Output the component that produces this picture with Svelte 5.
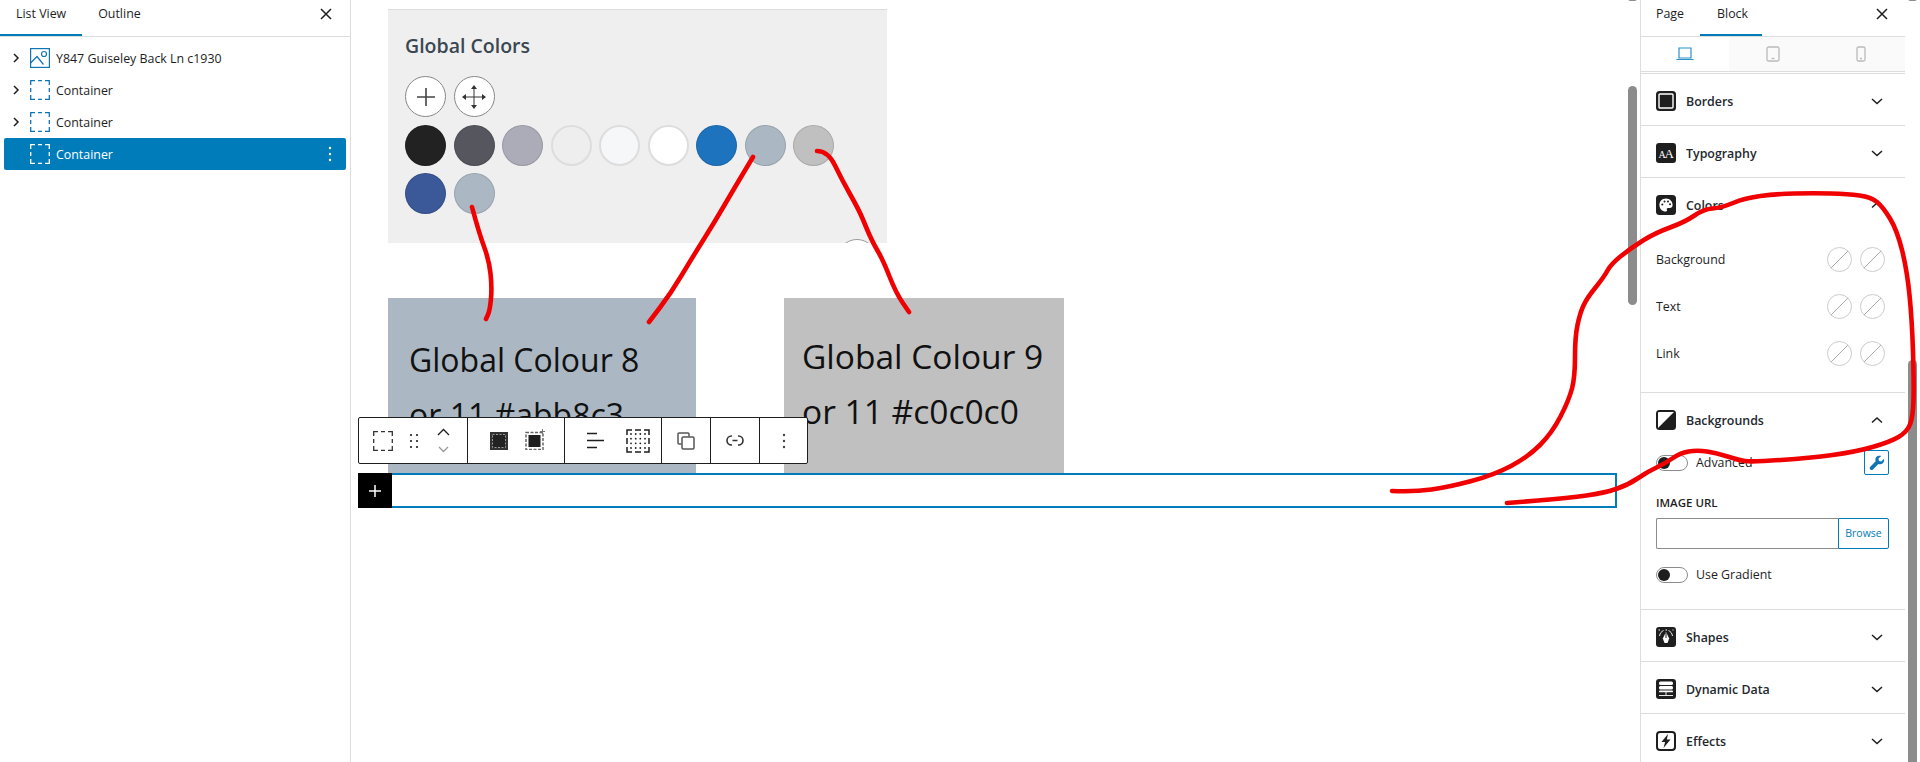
<script>
  const tree = [
    { label: 'Y847 Guiseley Back Ln c1930', kind: 'image', arrow: true },
    { label: 'Container', kind: 'box', arrow: true },
    { label: 'Container', kind: 'box', arrow: true },
    { label: 'Container', kind: 'box', arrow: false, selected: true }
  ];
  const rowOne = ['#222222', '#55565e', '#abacb8', '#eeeeee', '#f6f7f8', '#ffffff', '#1e73be', '#abb8c3', '#c0c0c0'];
  const rowTwo = ['#3b5998', '#abb8c3'];
  const colorRows = ['Background', 'Text', 'Link'];
  const gridDots = [5, 9.700, 14.300, 19];

  const strokes = [
    [[472,207],[479,233],[489,260],[492,287],[490,310],[486,319]],
    [[753,157],[735,187],[714,223],[692,258],[671,293],[649,322]],
    [[817,151],[828,151],[842,180],[859,210],[866,227],[873,243],[883,260],[896,293],[909,312]],
    [[1392,491],[1414,492],[1449,487],[1494,475],[1528,457],[1552,433],[1569,400],[1575,377],[1575,337],[1580,313],[1587,298],[1604,277],[1611,264],[1631,248],[1655,233],[1685,222],[1704,209],[1721,208],[1745,198],[1776,194],[1814,193],[1848,194],[1871,197],[1883,207],[1897,230],[1907,270],[1912,320],[1914,383],[1913,417],[1907,432],[1890,442],[1855,452],[1810,458],[1752,462],[1738,460],[1717,453],[1697,450],[1680,453],[1666,463],[1647,472],[1628,485],[1604,493],[1569,498],[1507,503]]
  ];

  // smooth the hand drawn lines through the midpoints
  function smooth(pts) {
    let d = `M${pts[0][0]} ${pts[0][1]}`;
    for (let i = 1; i < pts.length - 1; i++) {
      const mx = (pts[i][0] + pts[i + 1][0]) / 2;
      const my = (pts[i][1] + pts[i + 1][1]) / 2;
      d += ` Q${pts[i][0]} ${pts[i][1]} ${mx} ${my}`;
    }
    const last = pts[pts.length - 1];
    return d + ` L${last[0]} ${last[1]}`;
  }
</script>

{#snippet chevron(up)}
  <svg class="chev" width="14" height="14" viewBox="0 0 14 14"><path d={up ? 'M2 9.500 7 5l5 4.500' : 'M2 5l5 4.500L12 5'} /></svg>
{/snippet}

{#snippet dashed(size)}
  <svg width={size} height={size} viewBox="0 0 20 20" fill="none" stroke="currentColor" stroke-width="1.300">
    <path d="M.7 5V.7H5M8 .7h4M15 .7h4.300V5M19.300 8v4M19.300 15v4.300H15M12 19.300H8M5 19.300H.7V15M.7 12V8" />
  </svg>
{/snippet}

{#snippet sectionHead(label, up, icon)}
  <div class="sec-head">
    <span class="sec-icon">{@render icon()}</span>
    <span class="sec-label">{label}</span>
    {@render chevron(up)}
  </div>
{/snippet}

{#snippet iconBorders()}
  <svg viewBox="0 0 20 20"><rect width="20" height="20" rx="3.500" fill="#1e1e1e" /><rect x="3" y="3" width="14" height="14" rx="1" fill="#1e1e1e" stroke="#fff" stroke-width="1.400" /></svg>
{/snippet}
{#snippet iconType()}
  <svg viewBox="0 0 20 20"><rect width="20" height="20" rx="3" fill="#1e1e1e" /><text x="2.500" y="14.500" class="aa">A</text><text x="8.500" y="14.500" class="aa big">A</text></svg>
{/snippet}
{#snippet iconColors()}
  <svg viewBox="0 0 20 20"><rect width="20" height="20" rx="3.500" fill="#1e1e1e" /><path d="M10 3.500c-3.800 0-6.600 2.800-6.600 6.400s2.900 6.600 6.300 6.600c1.300 0 1.600-.9 1.200-1.700-.5-1 .1-1.900 1.200-1.900h1.700c1.600 0 2.800-1.200 2.800-3 0-3.500-2.800-6.400-6.600-6.400z" fill="#fff" /><g fill="#1e1e1e"><circle cx="6.300" cy="9.500" r="1" /><circle cx="8.500" cy="6.500" r="1" /><circle cx="12" cy="6.500" r="1" /><circle cx="14" cy="9.300" r="1" /></g></svg>
{/snippet}
{#snippet iconBackgrounds()}
  <svg viewBox="0 0 20 20"><rect width="20" height="20" rx="3.500" fill="#1e1e1e" /><path d="M2 18 18 2H3a1 1 0 0 0-1 1z" fill="#fff" /></svg>
{/snippet}
{#snippet iconShapes()}
  <svg viewBox="0 0 20 20"><rect width="20" height="20" rx="3" fill="#1e1e1e" /><path d="M10 5 6.800 11.500 8.500 16h3l1.700-4.500z" fill="#fff" /><path d="M10 6v5" stroke="#1e1e1e" /><path d="M3.500 9C4 6 5.500 4.500 7.500 3.500M16.500 9C16 6 14.500 4.500 12.500 3.500" fill="none" stroke="#fff" stroke-width=".9" /><path d="M2.500 3h15" stroke="#fff" stroke-width="1" stroke-dasharray="1.500 5.500" /></svg>
{/snippet}
{#snippet iconData()}
  <svg viewBox="0 0 20 20"><rect width="20" height="20" rx="3" fill="#1e1e1e" /><rect x="3" y="2.500" width="14" height="3.500" rx="1.500" fill="#fff" /><rect x="3" y="7" width="14" height="3.500" rx="1.500" fill="#fff" /><rect x="3" y="11.500" width="14" height="1.800" rx=".9" fill="#fff" /><path d="M10 13v3M3 16.500h14" stroke="#fff" stroke-width=".9" /></svg>
{/snippet}
{#snippet iconEffects()}
  <svg viewBox="0 0 20 20"><rect x="1" y="1" width="18" height="18" rx="3" fill="#fff" stroke="#1e1e1e" stroke-width="2" /><path d="M12 3 5.500 11h3.600L7.500 17 14.500 8.500h-3.700z" fill="#1e1e1e" /></svg>
{/snippet}

<div class="page">
  <aside class="list">
    <div class="tabs">
      <span class="tab active">List View</span>
      <span class="tab">Outline</span>
      <svg class="close" width="14" height="14" viewBox="0 0 14 14"><path d="M2 2l10 10M12 2 2 12" /></svg>
    </div>
    <ul>
      {#each tree as item}
        <li class:selected={item.selected}>
          <span class="arrow">
            {#if item.arrow}
              <svg width="8" height="10" viewBox="0 0 8 10"><path d="M2 1l4 4-4 4" /></svg>
            {/if}
          </span>
          <span class="tree-icon">
            {#if item.kind === 'image'}
              <svg width="20" height="20" viewBox="0 0 20 20" fill="none" stroke="currentColor" stroke-width="1.200"><rect x=".6" y=".6" width="18.800" height="18.800" /><path d="M.6 15 7 8.500l6.500 8" /><circle cx="14" cy="6" r="2.500" /></svg>
            {:else}
              {@render dashed(20)}
            {/if}
          </span>
          <span class="tree-label">{item.label}</span>
          {#if item.selected}
            <svg class="kebab" width="4" height="16" viewBox="0 0 4 16" fill="#fff"><circle cx="2" cy="2" r="1.200" /><circle cx="2" cy="8" r="1.200" /><circle cx="2" cy="14" r="1.200" /></svg>
          {/if}
        </li>
      {/each}
    </ul>
  </aside>

  <main class="canvas">
    <section class="palette">
      <h3>Global Colors</h3>
      <div class="swatches tools">
        <span class="swatch tool"><svg width="22" height="22" viewBox="0 0 22 22"><path d="M11 2v18M2 11h18" stroke="#444" stroke-width="1.600" /></svg></span>
        <span class="swatch tool"><svg width="30" height="30" viewBox="0 0 30 30" fill="#333"><path d="M15 5v20M5 15h20" stroke="#333" stroke-width="1" /><path d="M15 3l3 4h-6zM15 27l3-4h-6zM3 15l4-3v6zM27 15l-4-3v6z" /></svg></span>
      </div>
      <div class="swatches">
        {#each rowOne as c}
          <span class="swatch" class:pale={c > '#e'} style="background:{c}"></span>
        {/each}
      </div>
      <div class="swatches">
        {#each rowTwo as c}
          <span class="swatch" style="background:{c}"></span>
        {/each}
      </div>
      <span class="peek"></span>
    </section>

    <div class="samples">
      <div class="sample first">Global Colour 8<br />or 11 #abb8c3</div>
      <div class="sample second">Global Colour 9<br />or 11 #c0c0c0</div>
    </div>

    <div class="toolbar">
      <div class="tgroup g1">
        <span class="ti">{@render dashed(20)}</span>
        <svg width="10" height="16" viewBox="0 0 10 16" fill="#1e1e1e"><circle cx="2" cy="2" r="1.100" /><circle cx="8" cy="2" r="1.100" /><circle cx="2" cy="8" r="1.100" /><circle cx="8" cy="8" r="1.100" /><circle cx="2" cy="14" r="1.100" /><circle cx="8" cy="14" r="1.100" /></svg>
        <span class="updown">
          <svg width="13" height="8" viewBox="0 0 13 8"><path d="M1 7l5.500-5.500L12 7" /></svg>
          <svg class="off" width="13" height="8" viewBox="0 0 13 8"><path d="M2 2l4.500 4.500L11 2" /></svg>
        </span>
      </div>
      <div class="tgroup g2">
        <svg width="18" height="18" viewBox="0 0 18 18"><rect width="18" height="18" fill="#333" /><rect x="2.500" y="2.500" width="13" height="13" fill="#222" stroke="#999" stroke-dasharray="2 1.500" /></svg>
        <svg width="21" height="21" viewBox="0 0 21 21"><rect x="3.500" y="6" width="12" height="12" fill="#1e1e1e" /><path d="M1 3.500h17v17H1z" fill="none" stroke="#666" stroke-width="1.500" stroke-dasharray="3 1.500" /><path d="M17.500 0v5M15 2.500h5" stroke="#777" /></svg>
      </div>
      <div class="tgroup g3">
        <svg width="17" height="17" viewBox="0 0 17 17" stroke="#1e1e1e" stroke-width="1.300"><path d="M0 1.500h10M0 8.500h17M0 15.500h10" /></svg>
        <svg width="24" height="24" viewBox="0 0 24 24" fill="none" stroke="#1e1e1e" stroke-width="1.500">
          <path d="M1 6V1h5M9 1h6M18 1h5v5M23 9v6M23 18v5h-5M15 23H9M6 23H1v-5M1 15V9" />
          <g fill="#1e1e1e" stroke="none">
            {#each gridDots as y}
              {#each gridDots as x}
                <circle cx={x} cy={y} r=".9" />
              {/each}
            {/each}
          </g>
        </svg>
      </div>
      <div class="tgroup g4">
        <svg width="18" height="18" viewBox="0 0 18 18" fill="none" stroke="#555" stroke-width="1.500"><path d="M4.500 12H2a1 1 0 0 1-1-1V2a1 1 0 0 1 1-1h9a1 1 0 0 1 1 1v2.500" /><rect x="5" y="5" width="12" height="12" rx="1.200" /></svg>
      </div>
      <div class="tgroup g5">
        <svg width="18" height="11" viewBox="0 0 18 11" fill="none" stroke="#333" stroke-width="1.600"><path d="M6 1H5.500a4.500 4.500 0 0 0 0 9H6M12 1h.5a4.500 4.500 0 0 1 0 9H12M6.500 5.500h5" /></svg>
      </div>
      <div class="tgroup g6">
        <svg width="4" height="16" viewBox="0 0 4 16" fill="#444"><circle cx="2" cy="2" r="1.200" /><circle cx="2" cy="8" r="1.200" /><circle cx="2" cy="14" r="1.200" /></svg>
      </div>
    </div>

    <div class="new-block">
      <span class="add"><svg width="14" height="14" viewBox="0 0 14 14"><path d="M7 1v12M1 7h12" stroke="#fff" stroke-width="1.500" /></svg></span>
    </div>
    <span class="thumb thumb-left"></span>
    <span class="thumb thumb-left-top"></span>
  </main>

  <aside class="inspector">
    <div class="panel">
      <div class="tabs">
        <span class="tab">Page</span>
        <span class="tab active">Block</span>
        <svg class="close" width="14" height="14" viewBox="0 0 14 14"><path d="M2 2l10 10M12 2 2 12" /></svg>
      </div>
      <div class="devices">
        <span class="device on"><svg width="18" height="14" viewBox="0 0 18 14" fill="none" stroke="currentColor" stroke-width="1.200"><path d="M3 1h12v10H3zM.5 12.500h17" /></svg></span>
        <span class="device"><svg width="14" height="16" viewBox="0 0 14 16" fill="none" stroke="currentColor" stroke-width="1.300"><rect x="1" y="1" width="12" height="14" rx="1.500" /><path d="M5.500 12.500h3" /></svg></span>
        <span class="device"><svg width="10" height="16" viewBox="0 0 10 16" fill="none" stroke="currentColor" stroke-width="1.300"><rect x="1" y="1" width="8" height="14" rx="1.500" /><path d="M4 12.500h2" /></svg></span>
      </div>

      <section>{@render sectionHead('Borders', false, iconBorders)}</section>
      <section>{@render sectionHead('Typography', false, iconType)}</section>
      <section class="open colors">
        {@render sectionHead('Colors', true, iconColors)}
        {#each colorRows as name}
          <div class="color-row">
            <span>{name}</span>
            <span class="none"></span>
            <span class="none"></span>
          </div>
        {/each}
      </section>
      <section class="open bgs">
        {@render sectionHead('Backgrounds', true, iconBackgrounds)}
        <div class="toggle-row">
          <span class="toggle"></span>
          <span class="toggle-label">Advanced</span>
          <span class="wrench"><svg width="16" height="16" viewBox="0 0 16 16" fill="#0f75b5"><path d="M15 3.800 12.300 6.400 10 5.900 9.500 3.600 12.200 1C10.300.3 8.300.8 7.300 2.100 6.300 3.300 6.100 5 6.700 6.300L1.300 11.700c-.8.800-.8 1.900 0 2.700.8.800 2 .8 2.700 0L9.400 9c1.400.6 3.200.4 4.400-.7C15 7.200 15.500 5.400 15 3.800z" /></svg></span>
        </div>
        <label class="field-label" for="img-url">IMAGE URL</label>
        <div class="url">
          <input id="img-url" type="text" />
          <span class="browse">Browse</span>
        </div>
        <div class="toggle-row gradient">
          <span class="toggle"></span>
          <span class="toggle-label">Use Gradient</span>
        </div>
      </section>
      <section>{@render sectionHead('Shapes', false, iconShapes)}</section>
      <section>{@render sectionHead('Dynamic Data', false, iconData)}</section>
      <section class="last">{@render sectionHead('Effects', false, iconEffects)}</section>
    </div>
    <span class="thumb thumb-right"></span>
    <span class="thumb thumb-right-top"></span>
  </aside>

  <svg class="scribble" width="1920" height="762" viewBox="0 0 1920 762">
    {#each strokes as pts}
      <path d={smooth(pts)} />
    {/each}
  </svg>
</div>

<style>
  :global(body) {
    margin: 0;
    background: #fff;
    overflow: hidden;
  }
  .page {
    position: relative;
    display: flex;
    width: 1920px;
    height: 762px;
    overflow: hidden;
    font-family: "Open Sans", "Noto Sans", sans-serif;
    color: #1e1e1e;
    font-size: 12.400px;
  }
  .list {
    width: 350px;
    flex: none;
    border-right: 1px solid #ddd;
  }
  .tabs {
    position: relative;
    display: flex;
    height: 36px;
    border-bottom: 1px solid #ddd;
    box-sizing: content-box;
  }
  .tab {
    padding: 0 16px;
    line-height: 27px;
    height: 36px;
    box-sizing: border-box;
    border-bottom: 2px solid transparent;
    margin-bottom: -1px;
  }
  .tab.active {
    border-bottom-color: #007cba;
  }
  .close {
    position: absolute;
    right: 17px;
    top: 7px;
    fill: none;
    stroke: #1e1e1e;
    stroke-width: 1.500;
  }
  ul {
    list-style: none;
    margin: 5px 4px 0;
    padding: 0;
  }
  li {
    display: flex;
    align-items: center;
    height: 32px;
    border-radius: 2px;
  }
  li.selected {
    background: #007cba;
    color: #fff;
  }
  .arrow {
    display: flex;
    width: 26px;
    padding-left: 8px;
    box-sizing: border-box;
  }
  .arrow svg {
    fill: none;
    stroke: #1e1e1e;
    stroke-width: 1.500;
  }
  .tree-icon {
    display: flex;
    color: #0f75b5;
    margin-right: 6px;
  }
  li.selected .tree-icon {
    color: #fff;
  }
  .kebab {
    margin-left: auto;
    margin-right: 14px;
  }

  .canvas {
    position: relative;
    flex: 1;
    min-width: 0;
    padding: 9px 0 0 37px;
  }
  .palette {
    position: relative;
    overflow: hidden;
    width: 499px;
    height: 234px;
    box-sizing: border-box;
    background: #efefef;
    padding: 24px 17px 0;
  }
  h3 {
    margin: 0 0 18px;
    font-size: 19.500px;
    line-height: 24px;
    font-weight: 600;
    color: #3a4752;
  }
  .swatches {
    display: flex;
    gap: 7.500px;
    margin-bottom: 7px;
  }
  .swatches.tools {
    margin-bottom: 8px;
  }
  .swatch {
    display: flex;
    align-items: center;
    justify-content: center;
    width: 41px;
    height: 41px;
    box-sizing: border-box;
    border-radius: 50%;
    border: 1px solid rgba(0, 0, 0, 0.12);
  }
  .swatch.tool {
    background: #fff;
    border: 1.500px solid #888;
  }
  .swatch.pale {
    border: 2px solid #ddd;
  }
  .peek {
    position: absolute;
    right: 10px;
    bottom: -36px;
    width: 38px;
    height: 38px;
    border-radius: 50%;
    border: 1px solid #999;
    background: #fff;
  }
  .samples {
    display: flex;
    gap: 88px;
    margin-top: 55px;
    height: 175px;
  }
  .sample {
    box-sizing: border-box;
    height: 175px;
    padding: 34px 0 0 21px;
    font-size: 32px;
    line-height: 55px;
    color: #111;
  }
  .sample.first {
    width: 308px;
    background: #abb8c3;
  }
  .sample.second {
    width: 280px;
    background: #c0c0c0;
    padding: 31px 0 0 18px;
    font-size: 33.500px;
    white-space: nowrap;
  }
  .toolbar {
    position: absolute;
    left: 7px;
    top: 417px;
    display: flex;
    height: 47px;
    box-sizing: border-box;
    background: #fff;
    border: 1px solid #1e1e1e;
    border-radius: 2px;
  }
  .tgroup {
    display: flex;
    align-items: center;
    justify-content: center;
    box-sizing: content-box;
    border-right: 1px solid #1e1e1e;
  }
  .tgroup:last-child {
    border-right: none;
  }
  .ti {
    display: flex;
  }
  .g1 {
    width: 94px;
    padding-left: 14px;
    justify-content: flex-start;
    gap: 16px;
    color: #333;
  }
  .g2 {
    width: 74px;
    padding-left: 22px;
    justify-content: flex-start;
    gap: 17px;
  }
  .g2 svg:last-child {
    margin-top: -2px;
  }
  .g3 {
    width: 74px;
    padding-left: 22px;
    justify-content: flex-start;
    gap: 22px;
  }
  .g4 { width: 48px; }
  .g5 { width: 48px; }
  .g6 { width: 47px; }
  .updown {
    display: flex;
    flex-direction: column;
    gap: 9px;
    margin-left: 2px;
  }
  .updown svg {
    fill: none;
    stroke: #1e1e1e;
    stroke-width: 1.300;
  }
  .updown svg.off {
    stroke: #999;
  }
  .new-block {
    position: relative;
    margin: 0 0 0 -30px;
    width: 1259px;
    height: 35px;
    box-sizing: border-box;
    border: 2px solid #007cba;
    border-left: none;
  }
  .add {
    position: absolute;
    left: 0;
    top: -2px;
    display: flex;
    align-items: center;
    justify-content: center;
    width: 34px;
    height: 35px;
    background: #000;
  }
  .thumb {
    position: absolute;
    width: 9px;
    background: #8c8c8c;
    border-radius: 5px;
  }
  .thumb-left {
    top: 86px;
    left: 1277px;
    height: 219px;
  }
  .thumb-left-top {
    top: -4px;
    left: 1277px;
    height: 5px;
  }

  .inspector {
    position: relative;
    flex: none;
    width: 280px;
    border-left: 1px solid #ddd;
    box-sizing: border-box;
  }
  .panel {
    width: 264px;
  }
  .inspector .tabs .tab:first-child {
    width: 59px;
    padding-left: 15px;
  }
  .inspector .tabs .tab.active {
    width: 62px;
    padding-left: 17px;
  }
  .inspector .close {
    right: 16px;
  }
  .devices {
    display: flex;
    height: 34px;
    background: #fafafa;
    border-bottom: 1px solid #ddd;
    margin-bottom: 1px;
  }
  .device {
    flex: 1;
    display: flex;
    align-items: center;
    justify-content: center;
    color: #bbb;
  }
  .device.on {
    background: #fff;
    color: #2a8fc9;
  }
  section {
    border-top: 1px solid #ddd;
  }
  .sec-head {
    display: flex;
    align-items: center;
    height: 51px;
    box-sizing: border-box;
    padding: 3px 21px 0 15px;
  }
  .sec-icon {
    display: flex;
    width: 20px;
    height: 20px;
    margin-right: 10px;
  }
  .sec-icon :global(svg) {
    width: 20px;
    height: 20px;
  }
  .sec-icon :global(.aa) {
    font-family: "Liberation Serif", serif;
    font-size: 10px;
    fill: #fff;
  }
  .sec-icon :global(.aa.big) {
    font-size: 13px;
  }
  .sec-label {
    flex: 1;
    font-weight: 600;
    color: #23282d;
  }
  .chev {
    fill: none;
    stroke: #1e1e1e;
    stroke-width: 1.500;
  }
  .colors {
    height: 215px;
    box-sizing: border-box;
  }
  .color-row {
    display: flex;
    align-items: center;
    gap: 8px;
    height: 47px;
    padding: 0 20px 0 15px;
    position: relative;
    top: 6.500px;
  }
  .color-row span:first-child {
    flex: 1;
  }
  .none {
    position: relative;
    width: 25px;
    height: 25px;
    box-sizing: border-box;
    border: 1px solid #ccc;
    border-radius: 50%;
    background: linear-gradient(to top left, transparent 49%, #aaa 49%, #aaa 51%, transparent 51%);
  }
  .bgs {
    height: 217px;
    box-sizing: border-box;
  }
  .toggle-row {
    display: flex;
    align-items: center;
    height: 25px;
    padding: 0 16px 0 15px;
    margin-top: 6px;
  }
  .toggle {
    position: relative;
    width: 32px;
    height: 16px;
    box-sizing: border-box;
    border: 1px solid #8c8c8c;
    border-radius: 8px;
    margin-right: 8px;
  }
  .toggle::before {
    content: "";
    position: absolute;
    left: 1px;
    top: 1px;
    width: 12px;
    height: 12px;
    border-radius: 50%;
    background: #1e1e1e;
  }
  .wrench {
    display: flex;
    align-items: center;
    justify-content: center;
    margin-left: auto;
    width: 25px;
    height: 25px;
    box-sizing: border-box;
    border: 1px solid #007cba;
    border-radius: 2px;
  }
  .field-label {
    display: block;
    margin: 19px 15px 6px;
    font-size: 11.500px;
    font-weight: 600;
    line-height: 18px;
  }
  .url {
    display: flex;
    margin: 0 16px 0 15px;
    height: 31px;
  }
  input {
    flex: 1;
    min-width: 0;
    box-sizing: border-box;
    height: 31px;
    border: 1px solid #8c8c8c;
    border-right: none;
    border-radius: 2px 0 0 2px;
    background: #fff;
  }
  .browse {
    width: 51px;
    box-sizing: border-box;
    border: 1px solid #007cba;
    border-radius: 0 2px 2px 0;
    color: #007cba;
    font-size: 10.500px;
    line-height: 29px;
    text-align: center;
  }
  .gradient {
    margin-top: 13px;
  }
  .thumb-right {
    top: 360px;
    left: 267px;
    height: 420px;
  }
  .thumb-right-top {
    top: -4px;
    left: 267px;
    height: 5px;
  }
  .scribble {
    position: absolute;
    inset: 0;
    pointer-events: none;
    fill: none;
    stroke: #f00000;
    stroke-width: 4.600;
    stroke-linecap: round;
    stroke-linejoin: round;
  }
</style>
